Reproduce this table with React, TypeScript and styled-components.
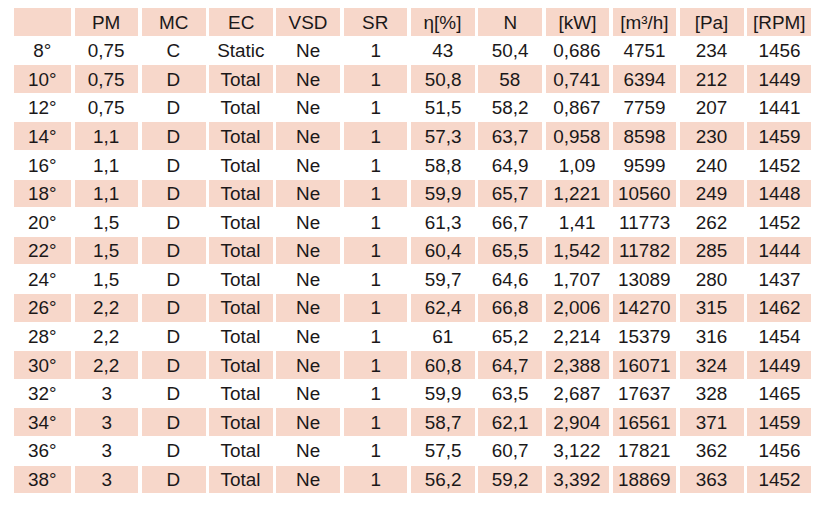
import * as React from "react";
import styled, { createGlobalStyle } from "styled-components";

const GlobalStyle = createGlobalStyle`
  html, body {
    margin: 0;
    padding: 0;
    background: #ffffff;
  }
  body {
    font-family: "Liberation Sans", Arial, sans-serif;
    color: #1b1819;
  }
`;

const headers = ["", "PM", "MC", "EC", "VSD", "SR", "η[%]", "N", "[kW]", "[m³/h]", "[Pa]", "[RPM]"];

const rows: string[][] = [
  ["8°", "0,75", "C", "Static", "Ne", "1", "43", "50,4", "0,686", "4751", "234", "1456"],
  ["10°", "0,75", "D", "Total", "Ne", "1", "50,8", "58", "0,741", "6394", "212", "1449"],
  ["12°", "0,75", "D", "Total", "Ne", "1", "51,5", "58,2", "0,867", "7759", "207", "1441"],
  ["14°", "1,1", "D", "Total", "Ne", "1", "57,3", "63,7", "0,958", "8598", "230", "1459"],
  ["16°", "1,1", "D", "Total", "Ne", "1", "58,8", "64,9", "1,09", "9599", "240", "1452"],
  ["18°", "1,1", "D", "Total", "Ne", "1", "59,9", "65,7", "1,221", "10560", "249", "1448"],
  ["20°", "1,5", "D", "Total", "Ne", "1", "61,3", "66,7", "1,41", "11773", "262", "1452"],
  ["22°", "1,5", "D", "Total", "Ne", "1", "60,4", "65,5", "1,542", "11782", "285", "1444"],
  ["24°", "1,5", "D", "Total", "Ne", "1", "59,7", "64,6", "1,707", "13089", "280", "1437"],
  ["26°", "2,2", "D", "Total", "Ne", "1", "62,4", "66,8", "2,006", "14270", "315", "1462"],
  ["28°", "2,2", "D", "Total", "Ne", "1", "61", "65,2", "2,214", "15379", "316", "1454"],
  ["30°", "2,2", "D", "Total", "Ne", "1", "60,8", "64,7", "2,388", "16071", "324", "1449"],
  ["32°", "3", "D", "Total", "Ne", "1", "59,9", "63,5", "2,687", "17637", "328", "1465"],
  ["34°", "3", "D", "Total", "Ne", "1", "58,7", "62,1", "2,904", "16561", "371", "1459"],
  ["36°", "3", "D", "Total", "Ne", "1", "57,5", "60,7", "3,122", "17821", "362", "1456"],
  ["38°", "3", "D", "Total", "Ne", "1", "56,2", "59,2", "3,392", "18869", "363", "1452"],
];

function TableRow({ cells, shaded }: { cells: string[]; shaded: boolean }) {
  return (
    <Row>
      {cells.map((text, idx) => (
        <Cell key={idx} shaded={shaded}>
          <Text>{text}</Text>
        </Cell>
      ))}
    </Row>
  );
}

export default function App() {
  return (
    <>
      <GlobalStyle />
      <Page>
        <Table>
          <TableRow cells={headers} shaded />
          {rows.map((r, idx) => (
            <TableRow key={r[0]} cells={r} shaded={idx % 2 === 1} />
          ))}
        </Table>
      </Page>
    </>
  );
}

const Page = styled.div`
  padding: 8px 0 0 14px;
`;

const Table = styled.div`
  display: flex;
  flex-direction: column;
  gap: 1px;
  width: 797px;
`;

const Row = styled.div`
  display: grid;
  grid-template-columns: 57px repeat(11, 1fr);
  column-gap: 3.6px;
  height: 27.6px;
`;

interface CellProps {
  readonly shaded?: boolean;
}

const Cell = styled.div.withConfig({
  shouldForwardProp: (prop) => prop !== "shaded",
})<CellProps>`
  display: flex;
  align-items: center;
  justify-content: center;
  background: ${(props) => (props.shaded ? "#f7d7ca" : "#ffffff")};
  font-size: 17.5px;
  line-height: 1;
  overflow: visible;
  white-space: nowrap;
`;

const Text = styled.span`
  display: inline-block;
  transform: scaleX(1.08);
  padding-top: 3px;
`;
